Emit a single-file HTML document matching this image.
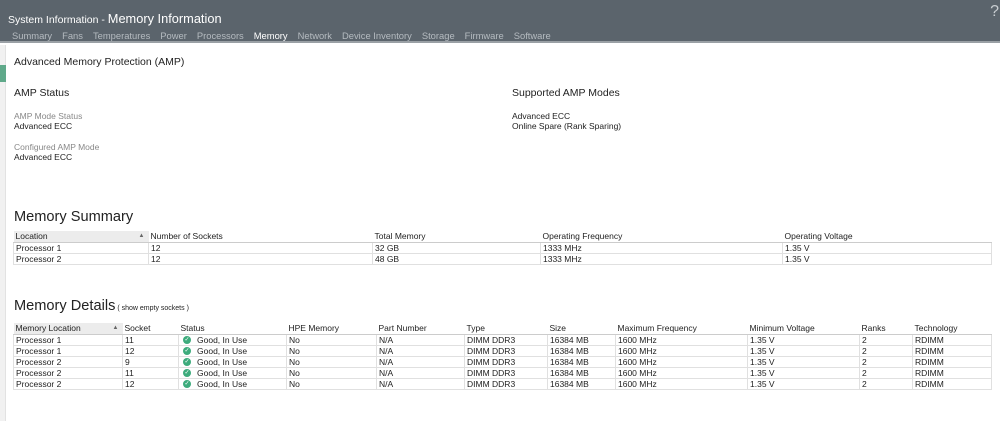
<!DOCTYPE html>
<html><head><meta charset="utf-8"><style>
*{margin:0;padding:0;box-sizing:border-box}
body{width:1000px;height:421px;overflow:hidden;background:#fff;font-family:"Liberation Sans",sans-serif;color:#222;position:relative}
.hdr{position:absolute;left:0;top:0;width:1000px;height:43px;background:#5b646c;border-bottom:2px solid #9aa0a5}
.title{position:absolute;left:8px;top:11px;color:#fff;font-size:10.5px}
.title b{font-weight:normal;font-size:12.8px}
.tabs{position:absolute;left:12px;top:30px;font-size:9.4px;color:#b5bbc0;white-space:nowrap}
.tabs span{margin-right:10px}
.tabs .on{color:#fff}
.q{position:absolute;right:1px;top:3px;color:#c8cdd1;font-size:16px}
.side{position:absolute;left:0;top:45px;width:6px;height:376px;background:#f1f1f1;border-right:1px solid #e2e2e2}
.green{position:absolute;left:0;top:65px;width:6px;height:17px;background:#5fa98a}
.t{position:absolute;font-size:10px}
.lab{color:#888;font-size:8.5px}
.val{font-size:8.5px}
h2{position:absolute;font-weight:normal;font-size:14.6px;left:14px}
table{position:absolute;left:13px;border-collapse:collapse;font-size:8.5px;table-layout:fixed}
td,th{height:11px;padding:0 1px 0 2px;text-align:left;font-weight:normal;border:1px solid #e0e0e0;border-top:none;white-space:nowrap;overflow:hidden;line-height:10px}
th{border-left:none;border-right:none;border-bottom:1px solid #ccc}
th.s{background:#ececec;position:relative}
th.s:after{content:"▲";position:absolute;right:4px;top:0;font-size:6px;color:#666}
.ok{display:inline-block;width:8px;height:8px;border-radius:50%;background:#3dab7c;color:#fff;font-size:6px;line-height:8px;text-align:center;vertical-align:top;margin:1px 6px 0 2px}
</style></head><body>
<div class="hdr"><div class="title">System Information - <b>Memory Information</b></div>
<div class="tabs"><span>Summary</span><span>Fans</span><span>Temperatures</span><span>Power</span><span>Processors</span><span class="on">Memory</span><span>Network</span><span>Device Inventory</span><span>Storage</span><span>Firmware</span><span>Software</span></div>
<div class="q">?</div></div>
<div class="side"></div><div class="green"></div>
<div class="t" style="left:14px;top:56px;font-size:10.5px">Advanced Memory Protection (AMP)</div>
<div class="t" style="left:14px;top:87px;font-size:10.5px">AMP Status</div>
<div class="t lab" style="left:14px;top:111px">AMP Mode Status</div>
<div class="t val" style="left:14px;top:121px">Advanced ECC</div>
<div class="t lab" style="left:14px;top:142px">Configured AMP Mode</div>
<div class="t val" style="left:14px;top:152px">Advanced ECC</div>
<div class="t" style="left:512px;top:87px;font-size:10.5px">Supported AMP Modes</div>
<div class="t val" style="left:512px;top:111px">Advanced ECC</div>
<div class="t val" style="left:512px;top:121px">Online Spare (Rank Sparing)</div>
<h2 style="top:209px">Memory Summary</h2>
<table style="top:231px;width:978px">
<colgroup><col style="width:135px"><col style="width:224px"><col style="width:168px"><col style="width:242px"><col style="width:209px"></colgroup>
<tr><th class="s">Location</th><th>Number of Sockets</th><th>Total Memory</th><th>Operating Frequency</th><th>Operating Voltage</th></tr>
<tr><td>Processor 1</td><td>12</td><td>32 GB</td><td>1333 MHz</td><td>1.35 V</td></tr>
<tr><td>Processor 2</td><td>12</td><td>48 GB</td><td>1333 MHz</td><td>1.35 V</td></tr>
</table>
<h2 style="top:298px">Memory Details<span style="font-size:7px"> ( show empty sockets )</span></h2>
<table style="top:323px;width:978px">
<colgroup><col style="width:109px"><col style="width:56px"><col style="width:108px"><col style="width:90px"><col style="width:88px"><col style="width:83px"><col style="width:68px"><col style="width:132px"><col style="width:112px"><col style="width:53px"><col style="width:79px"></colgroup>
<tr><th class="s">Memory Location</th><th>Socket</th><th>Status</th><th>HPE Memory</th><th>Part Number</th><th>Type</th><th>Size</th><th>Maximum Frequency</th><th>Minimum Voltage</th><th>Ranks</th><th>Technology</th></tr>
<tr><td>Processor 1</td><td>11</td><td><span class="ok">✓</span>Good, In Use</td><td>No</td><td>N/A</td><td>DIMM DDR3</td><td>16384 MB</td><td>1600 MHz</td><td>1.35 V</td><td>2</td><td>RDIMM</td></tr>
<tr><td>Processor 1</td><td>12</td><td><span class="ok">✓</span>Good, In Use</td><td>No</td><td>N/A</td><td>DIMM DDR3</td><td>16384 MB</td><td>1600 MHz</td><td>1.35 V</td><td>2</td><td>RDIMM</td></tr>
<tr><td>Processor 2</td><td>9</td><td><span class="ok">✓</span>Good, In Use</td><td>No</td><td>N/A</td><td>DIMM DDR3</td><td>16384 MB</td><td>1600 MHz</td><td>1.35 V</td><td>2</td><td>RDIMM</td></tr>
<tr><td>Processor 2</td><td>11</td><td><span class="ok">✓</span>Good, In Use</td><td>No</td><td>N/A</td><td>DIMM DDR3</td><td>16384 MB</td><td>1600 MHz</td><td>1.35 V</td><td>2</td><td>RDIMM</td></tr>
<tr><td>Processor 2</td><td>12</td><td><span class="ok">✓</span>Good, In Use</td><td>No</td><td>N/A</td><td>DIMM DDR3</td><td>16384 MB</td><td>1600 MHz</td><td>1.35 V</td><td>2</td><td>RDIMM</td></tr>
</table>
</body></html>
